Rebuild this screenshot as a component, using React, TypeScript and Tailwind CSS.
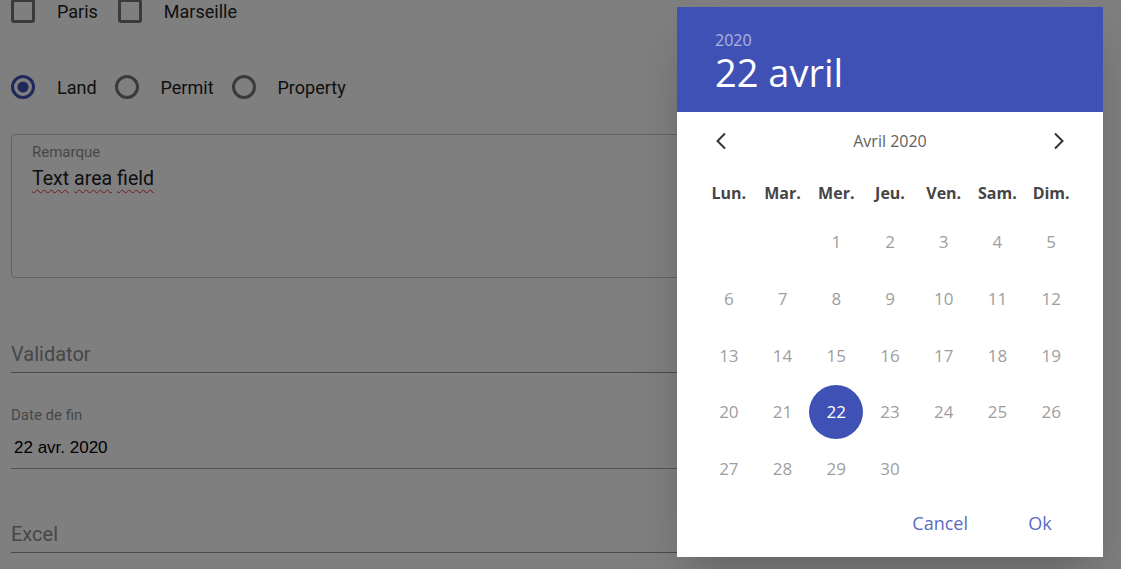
import React from 'react';

const weekDays = ['Lun.', 'Mar.', 'Mer.', 'Jeu.', 'Ven.', 'Sam.', 'Dim.'];

// April 2020 starts on a Wednesday
const days: (number | null)[] = [null, null, ...Array.from({ length: 30 }, (_, i) => i + 1)];

const Checkbox = ({ label }: { label: string }) => (
    <div className="flex items-center gap-[22px]">
        <div className="w-[24px] h-[24px] border-[3px] border-[#757575] rounded-[3px]" />
        <span className="text-[18px] text-[#212121]">{label}</span>
    </div>
);

const Radio = ({ label, checked }: { label: string; checked?: boolean }) => (
    <div className="flex items-center gap-[22px]">
        <svg width="24" height="24" viewBox="0 0 24 24">
            <circle cx="12" cy="12" r="10.5" fill="none" stroke={checked ? '#3f51b5' : '#757575'} strokeWidth="3" />
            {checked && <circle cx="12" cy="12" r="5.6" fill="#3f51b5" />}
        </svg>
        <span className="text-[18px] text-[#212121]">{label}</span>
    </div>
);

const Spell = ({ children }: { children: string }) => (
    <span className="underline decoration-wavy decoration-[#e53935] decoration-1 underline-offset-[4px]">{children}</span>
);

export default function App() {
    return (
        <div className="relative h-[569px] w-full overflow-hidden bg-white font-['Roboto',sans-serif]">
            {/* Form behind the dialog */}
            <div className="flex flex-col w-[1000px] px-[11px]">
                <div className="flex items-center gap-[20px] -mt-px h-[24px]">
                    <Checkbox label="Paris" />
                    <Checkbox label="Marseille" />
                </div>

                <div className="flex items-center gap-[18px] mt-[52px] h-[24px]">
                    <Radio label="Land" checked />
                    <Radio label="Permit" />
                    <Radio label="Property" />
                </div>

                <div className="mt-[35px] h-[144px] border border-[#c4c4c4] rounded-[4px] pl-[20px] pt-[9px]">
                    <div className="text-[15px] leading-[16px] text-[#8f8f8f]">Remarque</div>
                    <div className="mt-[7px] text-[19.5px] leading-[24px] text-[#212121] flex gap-[5px]">
                        <Spell>Text</Spell>
                        <Spell>area</Spell>
                        <Spell>field</Spell>
                    </div>
                </div>

                <div className="mt-[64px] border-b border-[#949494] pb-[6px]">
                    <div className="text-[20px] leading-[24px] text-[#8e8e8e]">Validator</div>
                </div>

                <div className="mt-[32px] border-b border-[#a8a8a8] pb-[8px]">
                    <div className="text-[15px] leading-[20px] text-[#8f8f8f]">Date de fin</div>
                    <div className="mt-[11px] pl-[3px] text-[17px] leading-[24px] text-black font-['Liberation_Sans',Arial,sans-serif]">22 avr. 2020</div>
                </div>

                <div className="mt-[53px] border-b border-[#949494] pb-[6px]">
                    <div className="text-[20px] leading-[24px] text-[#8e8e8e]">Excel</div>
                </div>
            </div>

            {/* Backdrop */}
            <div className="absolute inset-0 bg-black/50" />

            {/* Date picker dialog */}
            <div className="absolute left-[677px] top-[7px] w-[426px] h-[550px] bg-white shadow-2xl flex flex-col font-['Open_Sans',sans-serif]">
                <div className="h-[105px] bg-[#3f51b5] pl-[38px] pt-[24px]">
                    <div className="text-[16px] leading-[18px] mb-[2px] text-white/55">2020</div>
                    <div className="text-[38px] leading-[42px] text-white">22 avril</div>
                </div>

                <div className="mt-[5px] h-[48px] flex items-center justify-between px-[38px]">
                    <svg width="12" height="18" viewBox="0 0 12 18">
                        <path d="M10 1.5 L2.5 9 L10 16.5" fill="none" stroke="#333" strokeWidth="2" />
                    </svg>
                    <span className="text-[16px] text-[#616161]">Avril 2020</span>
                    <svg width="12" height="18" viewBox="0 0 12 18">
                        <path d="M2 1.5 L9.5 9 L2 16.5" fill="none" stroke="#333" strokeWidth="2" />
                    </svg>
                </div>

                <div className="px-[25px]">
                    <div className="mt-[16px] grid grid-cols-7 h-[24px] items-center">
                        {weekDays.map(d => (
                            <div key={d} className="text-center text-[16px] font-bold text-[#454545]">{d}</div>
                        ))}
                    </div>
                    <div className="mt-[8.5px] grid grid-cols-7 auto-rows-[56.75px]">
                        {days.map((d, i) => (
                            <div key={i} className="flex items-center justify-center">
                                {d === 22 ? (
                                    <div className="w-[54px] h-[54px] rounded-full bg-[#3f51b5] flex items-center justify-center text-[17px] text-white">
                                        {d}
                                    </div>
                                ) : (
                                    <span className="text-[17px] text-[#9e9e9e]">{d ?? ''}</span>
                                )}
                            </div>
                        ))}
                    </div>
                </div>

                <div className="mt-auto mb-[16px] flex justify-end items-center gap-[32px] pr-[31px] h-[36px]">
                    <button className="min-w-[64px] px-[8px] text-center text-[18px] text-[#5c6bc0]">Cancel</button>
                    <button className="min-w-[64px] px-[8px] text-center text-[18px] text-[#5c6bc0]">Ok</button>
                </div>
            </div>
        </div>
    );
}
